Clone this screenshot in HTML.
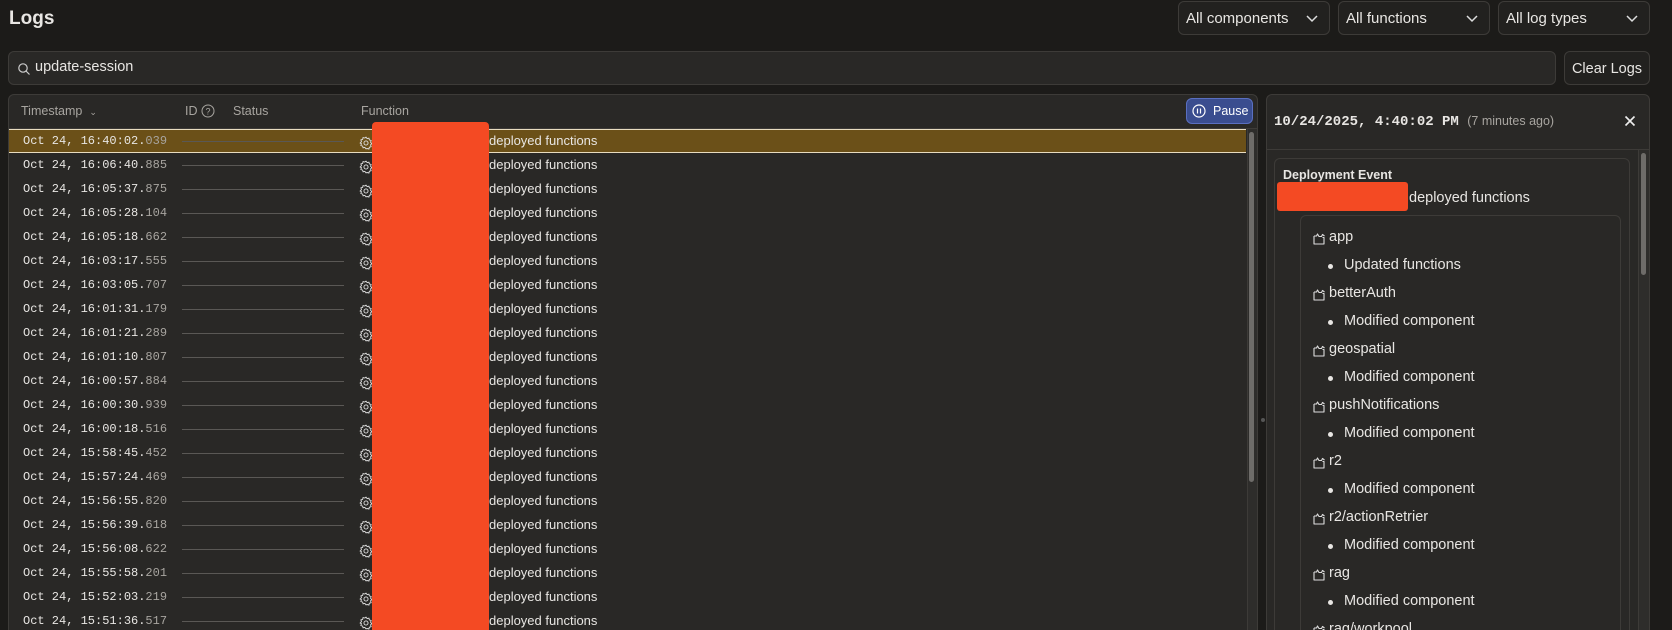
<!DOCTYPE html>
<html style="width:1672px;height:630px;overflow:hidden"><head><meta charset="utf-8"><style>
*{box-sizing:border-box;margin:0;padding:0}
body{width:1672px;height:630px;overflow:hidden;background:#1c1b19;color:#e8e6e3;font-family:"Liberation Sans",sans-serif}
#w{position:relative;width:1672px;height:630px;overflow:hidden}
.abs{position:absolute}
.dd{position:absolute;top:1px;height:34px;border:1px solid #3d3b38;border-radius:6px;background:#22211f;font-size:15px;line-height:34px;padding-left:7px;color:#e8e6e3}
.dd svg{position:absolute;right:10px;top:12px}
.mono{font-family:"Liberation Mono",monospace}
.row{position:absolute;left:0;width:1246px;height:24px;font-size:13px;line-height:24px}
.row .ts{position:absolute;left:23px;color:#e8e6e3;font-size:12px}
.row .ts span{color:#a8a5a0}
.row .ln{position:absolute;left:182px;width:162px;top:12px;height:1px;background:#5a5855}
.row .g{position:absolute;left:359px;top:5px}
.row .f{position:absolute;left:489px}
.it{position:absolute;left:1313px;font-size:14.5px}
.it svg{position:absolute;left:0;top:4px}
.it b{font-weight:normal;position:absolute;left:16px;white-space:nowrap}
.bl{position:absolute;left:1328px;font-size:14.5px;white-space:nowrap}
.bl:before{content:"";position:absolute;left:0;top:7px;width:5px;height:5px;border-radius:50%;background:#e8e6e3}
.bl b{font-weight:normal;position:absolute;left:16px}
</style></head><body><div id="w">
<div class="abs" style="left:9px;top:8px;font-size:19px;font-weight:bold">Logs</div>
<div class="dd" style="left:1178px;width:152px">All components<svg width="14" height="10"><path d="M2 2l5 5 5-5" stroke="#ddd" stroke-width="1.5" fill="none"/></svg></div>
<div class="dd" style="left:1338px;width:152px">All functions<svg width="14" height="10"><path d="M2 2l5 5 5-5" stroke="#ddd" stroke-width="1.5" fill="none"/></svg></div>
<div class="dd" style="left:1498px;width:152px">All log types<svg width="14" height="10"><path d="M2 2l5 5 5-5" stroke="#ddd" stroke-width="1.5" fill="none"/></svg></div>
<div class="abs" style="left:8px;top:51px;width:1548px;height:34px;border:1px solid #3d3b38;border-radius:6px;background:#292826"></div>
<svg class="abs" style="left:17px;top:62px" width="14" height="14"><circle cx="6" cy="6" r="4.2" stroke="#ccc" stroke-width="1.2" fill="none"/><path d="M9 9l3.5 3.5" stroke="#ccc" stroke-width="1.2"/></svg>
<div class="abs" style="left:35px;top:59px;font-size:14.5px">update-session</div>
<div class="abs" style="left:1564px;top:51px;width:86px;height:34px;border:1px solid #3d3b38;border-radius:6px;background:#22211f;font-size:14.5px;line-height:34px;text-align:center">Clear Logs</div>

<div class="abs" style="left:8px;top:94px;width:1250px;height:560px;border:1px solid #3d3b38;border-radius:6px;background:#292826"></div>
<div class="abs" style="left:9px;top:128px;width:1248px;height:1px;background:#3d3b38"></div>
<div class="abs" style="left:21px;top:104px;font-size:12.5px;color:#a8a5a0">Timestamp&nbsp; <span style="font-size:9px">⌄</span></div>
<div class="abs" style="left:185px;top:104px;font-size:12.5px;color:#a8a5a0">ID</div>
<svg class="abs" style="left:201px;top:104px" width="14" height="14"><circle cx="7" cy="7" r="6" stroke="#a8a5a0" stroke-width="1" fill="none"/><text x="7" y="10.5" font-size="9" fill="#a8a5a0" text-anchor="middle" font-family="Liberation Sans">?</text></svg>
<div class="abs" style="left:233px;top:104px;font-size:12.5px;color:#a8a5a0">Status</div>
<div class="abs" style="left:361px;top:104px;font-size:12.5px;color:#a8a5a0">Function</div>
<div class="abs" style="left:1186px;top:98px;width:67px;height:26px;border:1px solid #5a6fc0;border-radius:6px;background:#3a4d8f;font-size:12.5px;line-height:24px;color:#fff;padding-left:26px">Pause</div>
<svg class="abs" style="left:1192px;top:104px" width="14" height="14"><circle cx="7" cy="7" r="6" stroke="#fff" stroke-width="1.2" fill="none"/><path d="M5.5 4.5v5M8.5 4.5v5" stroke="#fff" stroke-width="1.2"/></svg>
<div class="abs" style="left:9px;top:129px;width:1237px;height:24px;background:#6b5018;border-top:1px solid #e8dcc0;border-bottom:1px solid #e8dcc0"></div>
<div class="abs" style="left:1247px;top:129px;width:10px;height:520px;background:#2e2d2b;border-left:1px solid #3d3b38"></div>
<div class="abs" style="left:1249px;top:132px;width:5px;height:350px;border-radius:3px;background:#6e6c69"></div>

<div id="rows"></div>
<div class="abs" style="left:372px;top:122px;width:117px;height:530px;background:#f44a23;border-radius:4px"></div>

<div class="abs" style="left:1261px;top:418px;width:4px;height:4px;border-radius:50%;background:#555"></div>
<div class="abs" style="left:1266px;top:94px;width:384px;height:560px;border:1px solid #3d3b38;border-radius:6px;background:#292826"></div>
<div class="abs" style="left:1266px;top:149px;width:384px;height:1px;background:#3d3b38"></div>
<div class="abs mono" style="left:1274px;top:114px;font-size:14px;font-weight:bold">10/24/2025, 4:40:02 PM <span style="font-family:'Liberation Sans',sans-serif;font-weight:normal;font-size:12.5px;color:#a8a5a0">(7 minutes ago)</span></div>
<svg class="abs" style="left:1624px;top:115px" width="12" height="12"><path d="M1.5 1.5l9 9M10.5 1.5l-9 9" stroke="#eee" stroke-width="1.6"/></svg>
<div class="abs" style="left:1638px;top:150px;width:11px;height:500px;background:#2e2d2b;border-left:1px solid #3d3b38"></div>
<div class="abs" style="left:1641px;top:153px;width:5px;height:122px;border-radius:3px;background:#6e6c69"></div>
<div class="abs" style="left:1274px;top:158px;width:356px;height:500px;border:1px solid #3d3b38;border-radius:6px"></div>
<div class="abs" style="left:1283px;top:168px;font-size:12.5px;font-weight:bold">Deployment Event</div>
<div class="abs" style="left:1277px;top:182px;width:131px;height:29px;background:#f44a23;border-radius:3px"></div>
<div class="abs" style="left:1409px;top:190px;font-size:14.5px">deployed functions</div>
<div class="abs" style="left:1300px;top:215px;width:321px;height:460px;border:1px solid #3d3b38;border-radius:6px"></div>
<div id="items"></div>
</div>
<script>
var ts=["16:40:02.039","16:06:40.885","16:05:37.875","16:05:28.104","16:05:18.662","16:03:17.555","16:03:05.707","16:01:31.179","16:01:21.289","16:01:10.807","16:00:57.884","16:00:30.939","16:00:18.516","15:58:45.452","15:57:24.469","15:56:55.820","15:56:39.618","15:56:08.622","15:55:58.201","15:52:03.219","15:51:36.517","15:50:12.004"];
var gear='<svg width="14" height="14" viewBox="0 0 24 24"><path d="M12 2l2 2.5 3-.8.8 3 3 1-1 3 2.2 2.3-2.2 2.3 1 3-3 1-.8 3-3-.8L12 22l-2-2.5-3 .8-.8-3-3-1 1-3L2 12l2.2-2.3-1-3 3-1 .8-3 3 .8z" stroke="#ddd" stroke-width="1.6" fill="none"/><circle cx="12" cy="12" r="3.5" stroke="#ddd" stroke-width="1.6" fill="none"/></svg>';
var h='';ts.forEach(function(t,i){var p=t.split('.');h+='<div class="row" style="top:'+(129+24*i)+'px"><div class="ts mono">Oct 24, '+p[0]+'.<span>'+p[1]+'</span></div><div class="ln"></div><div class="g">'+gear+'</div><div class="f">deployed functions</div></div>';});
document.getElementById('rows').innerHTML=h;
var its=[["app","Updated functions"],["betterAuth","Modified component"],["geospatial","Modified component"],["pushNotifications","Modified component"],["r2","Modified component"],["r2/actionRetrier","Modified component"],["rag","Modified component"],["rag/workpool","Modified component"]];
var fold='<svg width="13" height="12" viewBox="0 0 13 12"><path d="M1 3v8h10V4.5H9.5M1 3h2.5l1-2 1.5 2.5H8.5l1-2 2 1.5" stroke="#ddd" stroke-width="1.1" fill="none" stroke-linejoin="round"/></svg>';
var g='';its.forEach(function(x,i){var y=229+56*i;g+='<div class="it" style="top:'+y+'px">'+fold+'<b>'+x[0]+'</b></div>';if(x[1])g+='<div class="bl" style="top:'+(y+28)+'px"><b>'+x[1]+'</b></div>';});
document.getElementById('items').innerHTML=g;
</script>
</body></html>
